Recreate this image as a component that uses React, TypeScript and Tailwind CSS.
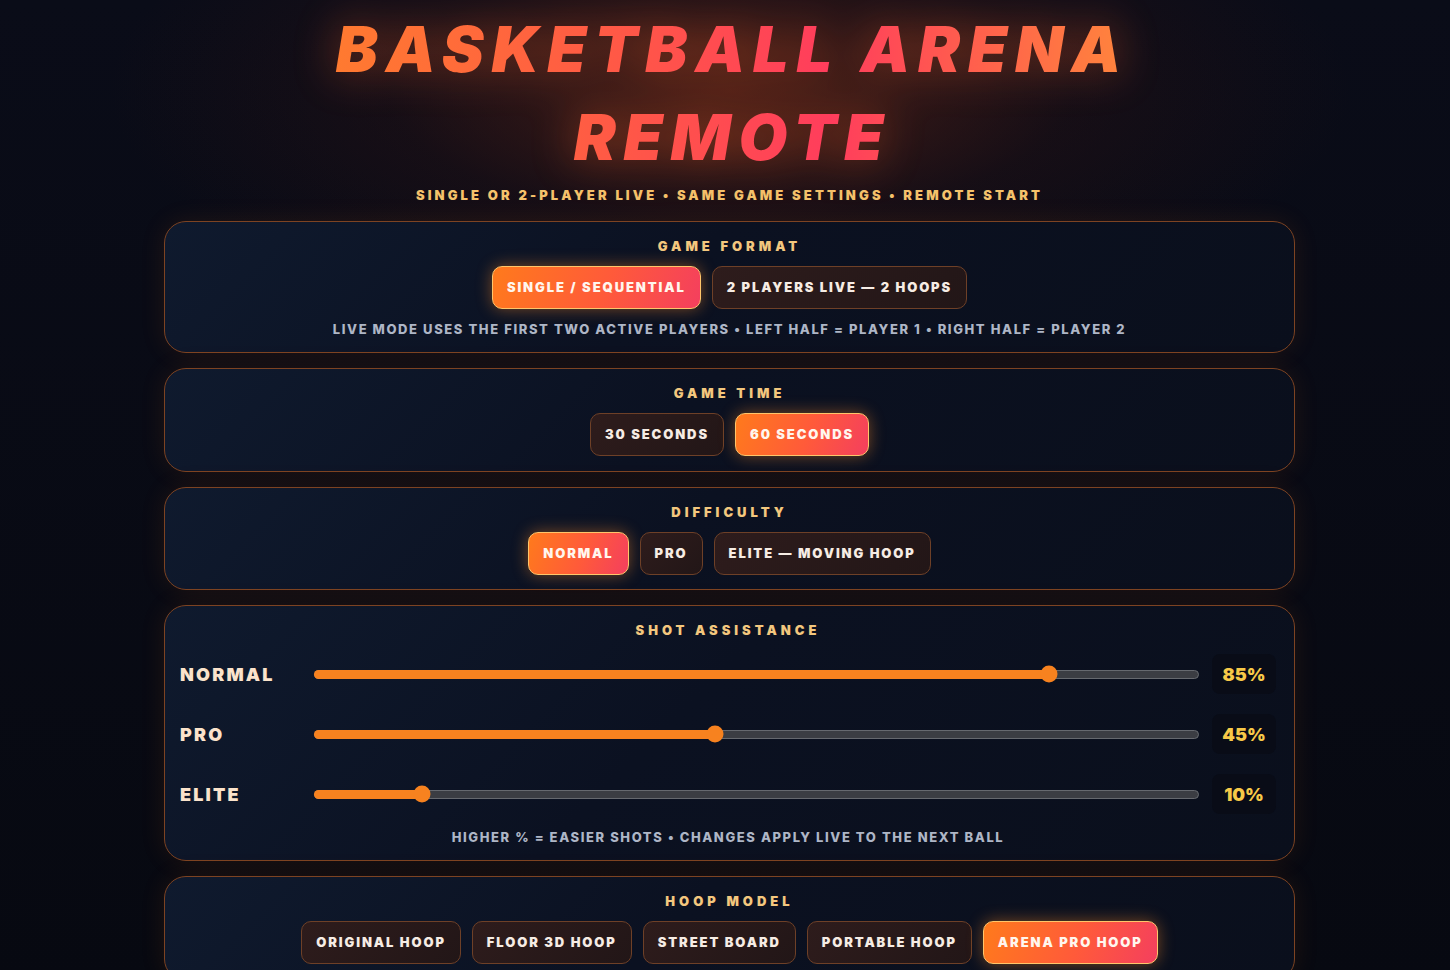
import React, { useState } from 'react'

type Choice = { id: string; label: string }

const formats: Choice[] = [
  { id: 'single', label: 'Single / Sequential' },
  { id: 'live', label: '2 Players Live — 2 Hoops' },
]

const times: Choice[] = [
  { id: '30', label: '30 Seconds' },
  { id: '60', label: '60 Seconds' },
]

const difficulties: Choice[] = [
  { id: 'normal', label: 'Normal' },
  { id: 'pro', label: 'Pro' },
  { id: 'elite', label: 'Elite — Moving Hoop' },
]

const hoops: Choice[] = [
  { id: 'original', label: 'Original Hoop' },
  { id: 'floor', label: 'Floor 3D Hoop' },
  { id: 'street', label: 'Street Board' },
  { id: 'portable', label: 'Portable Hoop' },
  { id: 'arena', label: 'Arena Pro Hoop' },
]

const heavy = "font-['Inter','Liberation_Sans',sans-serif]"

function Card({
  title,
  children,
  className = '',
}: {
  title: string
  children: React.ReactNode
  className?: string
}): React.JSX.Element {
  return (
    <section
      className={`rounded-[22px] border border-[#7d4322] bg-[linear-gradient(135deg,#0f1a2e_0%,#0b1121_45%,#0a0f1c_100%)] px-[15px] pt-[16px] shadow-[0_0_26px_rgba(249,115,22,0.10)] ${className}`}
    >
      <h2
        className={`${heavy} text-center text-[13px] leading-[16px] font-black uppercase tracking-[4px] text-[#f3c77e]`}
      >
        {title}
      </h2>
      {children}
    </section>
  )
}

function Options({
  items,
  value,
  onChange,
}: {
  items: Choice[]
  value: string
  onChange: (id: string) => void
}): React.JSX.Element {
  return (
    <div className="mt-[12px] flex justify-center gap-[11px]">
      {items.map((item) => {
        const active = item.id === value
        return (
          <button
            key={item.id}
            onClick={() => onChange(item.id)}
            className={`${heavy} h-[43px] rounded-[10px] border px-[14px] text-[13px] font-black uppercase tracking-[1.9px] ${
              active
                ? 'border-[#ffc56a] bg-[linear-gradient(110deg,#ff7a1c_0%,#ff5a3a_55%,#f43f5e_100%)] text-[#fff6ee] shadow-[0_0_16px_rgba(255,140,40,0.45)]'
                : 'border-[#6e4027] bg-[linear-gradient(135deg,#2e1c1c,#221617)] text-[#f6ece4]'
            }`}
          >
            {item.label}
          </button>
        )
      })}
    </div>
  )
}

function AssistSlider({
  label,
  value,
  onChange,
}: {
  label: string
  value: number
  onChange: (v: number) => void
}): React.JSX.Element {
  const pos = `calc(23px + (100% - 46px) * ${value / 100})`
  return (
    <div className="grid h-[40px] grid-cols-[121px_1fr_64px] items-center gap-[13px]">
      <span
        className={`${heavy} text-[18px] font-black uppercase tracking-[2.2px] text-[#fbe3cb]`}
      >
        {label}
      </span>
      <div
        className="relative h-[9px] cursor-pointer rounded-full border border-[#66696f] bg-[#3b3d43]"
        onClick={(e) => {
          const r = e.currentTarget.getBoundingClientRect()
          const p = ((e.clientX - r.left - 23) / (r.width - 46)) * 100
          onChange(Math.max(0, Math.min(100, Math.round(p))))
        }}
      >
        <div
          className="absolute left-[-1px] top-[-1px] h-[9px] rounded-full bg-[#f7821f]"
          style={{ width: pos }}
        />
        <div
          className="absolute top-1/2 h-[17px] w-[17px] -translate-x-1/2 -translate-y-1/2 rounded-full bg-[#f7821f]"
          style={{ left: pos }}
        />
      </div>
      <div
        className={`${heavy} flex h-[40px] items-center justify-center rounded-[8px] bg-[#090c17] text-[18px] font-black text-[#f7c948]`}
      >
        {value}%
      </div>
    </div>
  )
}

export default function App(): React.JSX.Element {
  const [format, setFormat] = useState('single')
  const [time, setTime] = useState('60')
  const [difficulty, setDifficulty] = useState('normal')
  const [hoop, setHoop] = useState('arena')
  const [assist, setAssist] = useState({ normal: 85, pro: 45, elite: 10 })

  return (
    <div className="min-h-screen overflow-hidden bg-[radial-gradient(ellipse_620px_240px_at_730px_90px,rgba(122,44,22,0.55),rgba(60,22,18,0.25)_55%,transparent_100%),linear-gradient(180deg,#0a0c18,#070911)] pl-[9px] pt-[5px]">
      <div className="mx-auto flex w-[1131px] flex-col">
        <h1 className="mx-auto w-[840px] bg-[linear-gradient(90deg,#ff7d2e_0%,#ff5a45_35%,#ff3d5c_62%,#ff8a3a_100%)] bg-clip-text pl-[6px] text-center font-['Inter','Liberation_Sans',sans-serif] text-[63px] leading-[88px] font-black italic uppercase tracking-[7.8px] text-transparent drop-shadow-[0_0_22px_rgba(255,100,40,0.45)]">
          Basketball Arena
          <br />
          Remote
        </h1>
        <p
          className={`${heavy} mt-[6px] text-center text-[13px] leading-[16px] font-black uppercase tracking-[3.1px] text-[#f5c26b]`}
        >
          Single or 2-player live • Same game settings • Remote start
        </p>

        <div className="mt-[18px] flex flex-col gap-[15px]">
          <Card title="Game Format" className="pb-[15px]">
            <Options items={formats} value={format} onChange={setFormat} />
            <p
              className={`${heavy} mt-[12px] text-center text-[13px] leading-[16px] font-extrabold uppercase tracking-[1.6px] text-[#aeb6c6]`}
            >
              Live mode uses the first two active players • Left half = Player 1
              • Right half = Player 2
            </p>
          </Card>

          <Card title="Game Time" className="pb-[15px]">
            <Options items={times} value={time} onChange={setTime} />
          </Card>

          <Card title="Difficulty" className="pb-[14px]">
            <Options
              items={difficulties}
              value={difficulty}
              onChange={setDifficulty}
            />
          </Card>

          <Card title="Shot Assistance" className="pb-[15px] pr-[18px]">
            <div className="mt-[16px] flex flex-col gap-[20px]">
              <AssistSlider
                label="Normal"
                value={assist.normal}
                onChange={(v) => setAssist({ ...assist, normal: v })}
              />
              <AssistSlider
                label="Pro"
                value={assist.pro}
                onChange={(v) => setAssist({ ...assist, pro: v })}
              />
              <AssistSlider
                label="Elite"
                value={assist.elite}
                onChange={(v) => setAssist({ ...assist, elite: v })}
              />
            </div>
            <p
              className={`${heavy} mt-[15px] text-center text-[13px] leading-[16px] font-extrabold uppercase tracking-[1.6px] text-[#aeb6c6]`}
            >
              Higher % = easier shots • Changes apply live to the next ball
            </p>
          </Card>

          <Card title="Hoop Model" className="pb-[16px]">
            <Options items={hoops} value={hoop} onChange={setHoop} />
          </Card>
        </div>
      </div>
    </div>
  )
}
